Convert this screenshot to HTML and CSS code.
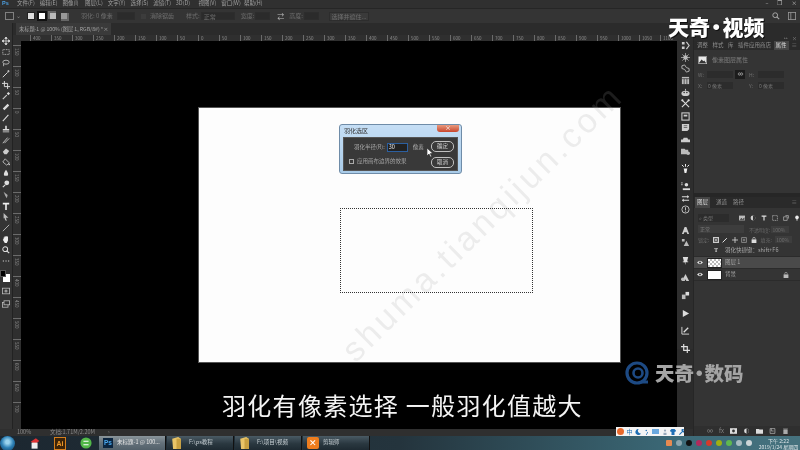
FILE: index.html
```html
<!DOCTYPE html>
<html lang="zh">
<head>
<meta charset="utf-8">
<title>Photoshop</title>
<link rel="stylesheet" href="styles.css">
</head>
<body>
<svg class="defs" width="0" height="0">
  <defs>
    <symbol id="eye" viewBox="0 0 10 8"><path d="M0 4Q5-2 10 4Q5 10 0 4Z" fill="#ddd"/><circle cx="5" cy="4" r="1.6" fill="#333"/></symbol>
  </defs>
</svg>
<div class="app">
  <header class="menu">
    <span class="ps-mark">Ps</span>
    <span class="mi">文件(F)</span><span class="mi">编辑(E)</span><span class="mi">图像(I)</span><span class="mi">图层(L)</span><span class="mi">文字(Y)</span><span class="mi">选择(S)</span><span class="mi">滤镜(T)</span><span class="mi">3D(D)</span><span class="mi">视图(V)</span><span class="mi">窗口(W)</span><span class="mi">帮助(H)</span>
    <span class="win-ctrls"><i>–</i><i>❐</i><i>×</i></span>
  </header>
  <section class="opts">
    <svg class="o-marq" viewBox="0 0 9 8"><rect x=".5" y=".5" width="8" height="7" fill="none" stroke="#ccc" stroke-dasharray="1 1"/></svg>
    <span class="o-caret">⌄</span>
    <span class="sq sq-a"></span><span class="sq sq-b"></span><span class="sq sq-c"></span><span class="sq sq-d"></span>
    <span class="o-lbl o-feather">羽化: 0 像素</span>
    <span class="o-box o-fbox"></span>
    <span class="o-check"></span>
    <span class="o-lbl">消除锯齿</span>
    <span class="o-lbl o-style">样式:</span>
    <span class="o-box o-sel">正常</span>
    <span class="o-lbl o-wl">宽度:</span>
    <span class="o-box o-w"></span>
    <span class="o-swap">⇄</span>
    <span class="o-lbl o-hl">高度:</span>
    <span class="o-box o-w"></span>
    <span class="o-box o-btn">选择并遮住...</span>
    <svg class="o-search" viewBox="0 0 10 10"><circle cx="4" cy="4" r="3" fill="none" stroke="#aaa" stroke-width="1.2"/><path d="M6 6l3 3" stroke="#aaa" stroke-width="1.3"/></svg>
    <svg class="o-space" viewBox="0 0 10 10"><rect x=".5" y=".5" width="9" height="9" fill="none" stroke="#999"/><path d="M3.500 .5V9.500" stroke="#999"/></svg>
  </section>
  <main class="main">
    <div class="left">
      <div class="work">
        <nav class="tools">
          <svg class="t" viewBox="0 0 10 10"><path d="M5 0v10M0 5h10M5 0L3.500 2h3zM5 10L3.500 8h3zM0 5l2-1.500v3zM10 5L8 3.500v3z" stroke="#ddd" fill="#ddd" stroke-width=".9"/></svg>
          <svg class="t" viewBox="0 0 10 10"><rect x="1" y="2" width="8" height="6" fill="none" stroke="#ddd" stroke-dasharray="1 1"/></svg>
          <svg class="t" viewBox="0 0 10 10"><ellipse cx="5" cy="4" rx="4" ry="2.500" fill="none" stroke="#ccc"/><path d="M2 6l0 3" stroke="#ccc"/></svg>
          <svg class="t" viewBox="0 0 10 10"><path d="M1 9L7 3" stroke="#ddd" stroke-width="1.200"/><path d="M8 0v3M6.500 1.500h3" stroke="#eee" stroke-width=".8"/></svg>
          <svg class="t" viewBox="0 0 10 10"><path d="M3 0v7h7M0 3h7v7" fill="none" stroke="#ddd" stroke-width="1.200"/></svg>
          <svg class="t" viewBox="0 0 10 10"><path d="M1 9L6 4" stroke="#ccc" stroke-width="1.400"/><path d="M6 2l2 2 2-2-2-2z" fill="#ddd"/></svg>
          <svg class="t" viewBox="0 0 10 10"><path d="M1 7L7 1l2 2-6 6z" fill="#ddd"/></svg>
          <svg class="t" viewBox="0 0 10 10"><path d="M1 9L8 1" stroke="#ddd" stroke-width="1.300"/></svg>
          <svg class="t" viewBox="0 0 10 10"><path d="M4 1h2v4h3v2H1V5h3zM1 8h8v1H1z" fill="#ddd"/></svg>
          <svg class="t" viewBox="0 0 10 10"><path d="M1 9L7 2M3 9L9 3" stroke="#ddd" stroke-width="1"/></svg>
          <svg class="t" viewBox="0 0 10 10"><path d="M1 6l4-4 4 3-3 4H3z" fill="#ccc"/></svg>
          <svg class="t" viewBox="0 0 10 10"><path d="M4 1l5 5-3 3-5-4z" fill="none" stroke="#ccc"/><circle cx="9" cy="8" r="1" fill="#ccc"/></svg>
          <svg class="t" viewBox="0 0 10 10"><path d="M5 1Q9 6 7 8.500H3Q1 6 5 1z" fill="#ddd"/></svg>
          <svg class="t" viewBox="0 0 10 10"><circle cx="6" cy="3.500" r="3" fill="#ddd"/><path d="M4 6L1 9" stroke="#ddd" stroke-width="1.400"/></svg>
          <svg class="t" viewBox="0 0 10 10"><path d="M2 1l5 4-1 4-2-3z" fill="#aaa"/></svg>
          <svg class="t" viewBox="0 0 10 10"><path d="M1 1h8v2H6v7H4V3H1z" fill="#eee"/></svg>
          <svg class="t" viewBox="0 0 10 10"><path d="M2 0l6 6H5l1 4-2-1-1-3-1 1z" fill="#bbb"/></svg>
          <svg class="t" viewBox="0 0 10 10"><path d="M1 9L9 1" stroke="#ccc"/></svg>
          <svg class="t" viewBox="0 0 10 10"><path d="M2 5V3h1v2-3h1.500v3-3.500H6V5 2h1.500v5L6 10H3.500L1 6z" fill="#eee"/></svg>
          <svg class="t" viewBox="0 0 10 10"><circle cx="4" cy="4" r="3" fill="none" stroke="#ddd" stroke-width="1.300"/><path d="M6 6l3 3" stroke="#ddd" stroke-width="1.500"/></svg>
          <svg class="t" viewBox="0 0 10 10"><path d="M1 5h1.500M4.300 5h1.500M7.500 5H9" stroke="#ccc" stroke-width="1.300"/></svg>
          <div class="swatch"><span class="sw-bg"></span><span class="sw-fg"></span></div>
          <svg class="t t-mask" viewBox="0 0 10 10"><rect x=".5" y="1.500" width="9" height="7" fill="none" stroke="#bbb"/><circle cx="5" cy="5" r="2" fill="#999"/></svg>
          <svg class="t t-scr" viewBox="0 0 10 10"><rect x=".5" y="3" width="7" height="6" fill="#333" stroke="#bbb"/><rect x="2.500" y="1" width="7" height="5" fill="#333" stroke="#bbb"/></svg>
        </nav>
        <div class="center">
          <div class="tabbar"><span class="doctab"><span>未标题-1 @ 100% (图层 1, RGB/8#) *</span><i>×</i></span></div>
          <div class="body">
            <div class="viewport">
              <div class="hruler">
                <span>400</span><span>350</span><span>300</span><span>250</span><span>200</span><span>150</span><span>100</span><span>50</span><span>0</span><span>50</span><span>100</span><span>150</span><span>200</span><span>250</span><span>300</span><span>350</span><span>400</span><span>450</span><span>500</span><span>550</span><span>600</span><span>650</span><span>700</span><span>750</span><span>800</span><span>850</span><span>900</span><span>950</span><span>1000</span><span>1050</span><span>1100</span>
              </div>
              <div class="stage">
                <div class="vruler">
                  <span>150</span><span>100</span><span>50</span><span>0</span><span>50</span><span>100</span><span>150</span><span>200</span><span>250</span><span>300</span><span>350</span><span>400</span><span>450</span><span>500</span><span>550</span><span>600</span><span>650</span><span>700</span>
                </div>
                <div class="canvas"><div class="page"></div></div>
              </div>
            </div>
            <aside class="dock">
              <svg class="d" viewBox="0 0 10 10"><path d="M1 1h3v3H1zM1 6h3v3H1z" fill="#ccc"/><path d="M6 1l3 4-3 4" fill="none" stroke="#ccc" stroke-width="1.300"/></svg>
              <svg class="d" viewBox="0 0 10 10"><circle cx="5" cy="5" r="2.500" fill="#bbb"/><path d="M5 0v10M0 5h10M1.500 1.500l7 7M8.500 1.500l-7 7" stroke="#bbb" stroke-width=".8"/></svg>
              <svg class="d" viewBox="0 0 10 10"><path d="M1 2l3-1 2 3 3 1v3l-3 1-2-3-3-1z" fill="none" stroke="#bbb"/></svg>
              <svg class="d" viewBox="0 0 10 10"><path d="M1 1h8v8H1z" fill="#bbb"/><path d="M3.500 3v6M6.500 3v6M1 3h8" stroke="#333" stroke-width=".8"/></svg>
              <svg class="d" viewBox="0 0 10 10"><ellipse cx="5" cy="6" rx="4.500" ry="3" fill="#ccc"/><circle cx="3.500" cy="5" r=".9" fill="#333"/><circle cx="6.500" cy="5" r=".9" fill="#333"/><path d="M5 1v2" stroke="#ccc"/></svg>
              <svg class="d" viewBox="0 0 10 10"><path d="M1 1l8 8M9 1L1 9" stroke="#ddd" stroke-width="1.200"/><circle cx="1.500" cy="1.500" r="1.200" fill="#ddd"/><circle cx="8.500" cy="1.500" r="1.200" fill="#ddd"/></svg>
              <svg class="d d-wide" viewBox="0 0 10 10"><rect x="1" y="1" width="8" height="8" fill="none" stroke="#ccc" stroke-width="1.200"/><rect x="3" y="3" width="4" height="2" fill="#ccc"/></svg>
              <svg class="d" viewBox="0 0 10 10"><path d="M1 1h8v6L7 9H1z" fill="#ccc"/><path d="M3 3h4M3 5h4" stroke="#333" stroke-width=".7"/></svg>
              <svg class="d" viewBox="0 0 10 10"><path d="M0 5h2l1-2h4l1 2h2v3H0z" fill="#ccc"/></svg>
              <svg class="d" viewBox="0 0 10 10"><path d="M0 2h4l1 1h3v5H0z" fill="#bbb"/><circle cx="8" cy="7" r="2" fill="#bbb"/></svg>
              <svg class="d d-gap" viewBox="0 0 10 10"><path d="M3 5h4l-1 5H4z" fill="#eee"/><path d="M1 1l2 2M5 0v3M9 1L7 3" stroke="#eee" stroke-width="1.100"/></svg>
              <svg class="d d-gap" viewBox="0 0 10 10"><circle cx="6" cy="3" r="2" fill="#ddd"/><path d="M2 9V7h8v2z" fill="#ddd"/><path d="M0 1h2M0 3h2" stroke="#bbb"/></svg>
              <svg class="d" viewBox="0 0 10 10"><path d="M1 3h7M9 7H2" stroke="#ddd" stroke-width="1.200"/><path d="M7 1l2 2-2 2zM3 5L1 7l2 2z" fill="#ddd"/></svg>
              <svg class="d" viewBox="0 0 10 10"><circle cx="5" cy="5" r="4" fill="none" stroke="#ccc"/><path d="M5 2.500v3.500M5 7v1" stroke="#ccc"/></svg>
              <svg class="d d-gap2" viewBox="0 0 10 10"><path d="M1 9L4 1h2l3 8H7l-.7-2H3.700L3 9z" fill="#ccc"/></svg>
              <svg class="d" viewBox="0 0 10 10"><path d="M1 1h3v3H1zM6 3l3 6H3z" fill="#bbb"/></svg>
              <svg class="d d-gap" viewBox="0 0 10 10"><path d="M2 1h6L7 5v1h1v1H5v3L4 7H2V6h1V5z" fill="#ddd"/></svg>
              <svg class="d d-gap" viewBox="0 0 10 10"><path d="M5 1L1 9h3l1-2 1 2h3z" fill="#ccc"/><circle cx="2" cy="7" r="2" fill="#bbb"/></svg>
              <svg class="d d-gap" viewBox="0 0 10 10"><path d="M1 4h4v5H1z" fill="#bbb"/><path d="M5 1h4v4H5z" fill="#ddd"/></svg>
              <svg class="d d-gap" viewBox="0 0 10 10"><path d="M2 1l7 4-7 4z" fill="#ddd"/></svg>
              <svg class="d d-gap" viewBox="0 0 10 10"><path d="M1 1v8h8" fill="none" stroke="#ddd"/><path d="M3 7l5-5" stroke="#ddd" stroke-width="1.500"/></svg>
              <svg class="d d-gap" viewBox="0 0 10 10"><path d="M3 0v7h7M0 3h7v7" fill="none" stroke="#ddd" stroke-width="1.300"/></svg>
            </aside>
          </div>
        </div>
      </div>
      <footer class="status"><span class="st-zoom">100%</span><span class="st-doc">文档:1.71M/2.20M</span><span class="st-caret">›</span></footer>
    </div>
    <div class="panels">
      <div class="p-collapse"><span>‣‣</span><span>×</span></div>
      <div class="p-tabs">
        <span>调整</span><span>样式</span><span>库</span><span class="wide">插件应用商店</span><span class="on">属性</span><b>≡</b>
      </div>
      <section class="props">
        <div class="prop-head">
          <svg class="prop-ic" viewBox="0 0 10 9"><rect width="10" height="9" fill="#e8e8e8"/><path d="M1 8l3-4 2 2 1-1 2 3z" fill="#333"/><rect x=".7" y=".7" width="8.600" height="7.600" fill="none" stroke="#333" stroke-width=".5"/></svg>
          <span>像素图层属性</span>
        </div>
        <div class="prop-grid">
          <span class="pl">W:</span><span class="pf"></span><span class="plink"><svg viewBox="0 0 10 6"><path d="M4.500 1.500A2 1.700 0 1 0 4.500 4.500L5.500 1.500A2 1.700 0 1 1 5.500 4.500" fill="none" stroke="#ddd" stroke-width=".9"/></svg></span><span class="pl">H:</span><span class="pf"></span>
          <span class="pl">X:</span><span class="pf">0 像素</span><span></span><span class="pl">Y:</span><span class="pf">0 像素</span>
        </div>
      </section>
      <div class="p-sep"></div>
      <div class="p-tabs l-tabs"><span class="on">图层</span><span>通道</span><span>路径</span><b>≡</b></div>
      <section class="layers">
        <div class="l-filter">
          <span class="l-kind">⌕ 类型</span>
          <svg class="f" viewBox="0 0 10 8"><rect width="10" height="8" fill="#bbb"/><path d="M1 7l3-3 2 2 3-3v4z" fill="#333"/></svg>
          <svg class="f" viewBox="0 0 10 10"><circle cx="5" cy="5" r="4" fill="#ccc"/><path d="M5 1a4 4 0 0 1 0 8z" fill="#333"/></svg>
          <svg class="f" viewBox="0 0 10 10"><path d="M1 1h8v2H6v6H4V3H1z" fill="#ddd"/></svg>
          <svg class="f" viewBox="0 0 10 10"><path d="M1 1h8v8H1z" fill="none" stroke="#ccc" stroke-dasharray="2 1"/></svg>
          <svg class="f" viewBox="0 0 10 10"><path d="M1 3h6v6H1z" fill="none" stroke="#ccc"/><path d="M4 1h5v5" fill="none" stroke="#ccc"/></svg>
          <svg class="f" viewBox="0 0 10 10"><circle cx="5" cy="4" r="3" fill="#eee"/><path d="M4 7h2v2H4z" fill="#eee"/></svg>
        </div>
        <div class="l-row2"><span class="l-blend">正常</span><span class="l-dim">不透明度:</span><span class="l-val">100%</span></div>
        <div class="l-row3">
          <span class="l-dim">锁定:</span>
          <svg class="lk" viewBox="0 0 10 10"><path d="M0 0h10v10H0z" fill="#ccc"/><path d="M2 2h6v6H2z" fill="#444"/><circle cx="5" cy="5" r="1.500" fill="#ccc"/></svg>
          <svg class="lk" viewBox="0 0 10 10"><path d="M1 9L8 2" stroke="#eee" stroke-width="1.600"/></svg>
          <svg class="lk" viewBox="0 0 10 10"><path d="M5 0v10M0 5h10" stroke="#ddd" stroke-width="1.300"/></svg>
          <svg class="lk" viewBox="0 0 10 10"><path d="M1 1h8v8H1z" fill="none" stroke="#bbb"/><path d="M5 3v4M3 5h4" stroke="#bbb"/></svg>
          <svg class="lk" viewBox="0 0 10 10"><rect x="1" y="4" width="8" height="6" fill="#ddd"/><path d="M3 4V2.500a2 2 0 0 1 4 0V4" fill="none" stroke="#ddd"/></svg>
          <span class="l-dim l-fill">填充:</span><span class="l-val l-val2">100%</span>
        </div>
        <div class="layer l-text"><span class="eye-slot"></span><span class="l-t">T</span><span>羽化快捷键：shift+F6</span></div>
        <div class="layer l-sel"><svg class="eye"><use href="#eye"/></svg><span class="thumb checker"></span><span>图层 1</span></div>
        <div class="layer"><svg class="eye"><use href="#eye"/></svg><span class="thumb"></span><span>背景</span><svg class="lock" viewBox="0 0 10 10"><rect x="1" y="4" width="8" height="6" fill="#bbb"/><path d="M3 4V2.500a2 2 0 0 1 4 0V4" fill="none" stroke="#bbb"/></svg></div>
        <div class="l-fillspace"></div>
        <div class="l-foot">
          <span>∞</span><span>fx</span>
          <svg class="ft" viewBox="0 0 10 8"><rect width="10" height="8" fill="#ddd"/><circle cx="5" cy="4" r="2" fill="#333"/></svg>
          <svg class="ft" viewBox="0 0 10 10"><circle cx="5" cy="5" r="4" fill="#ddd"/><path d="M5 1a4 4 0 0 1 0 8z" fill="#333"/></svg>
          <svg class="ft" viewBox="0 0 10 8"><path d="M0 1h4l1 1h5v6H0z" fill="#ddd"/></svg>
          <svg class="ft" viewBox="0 0 10 10"><path d="M1 1h8v8H1z" fill="none" stroke="#ccc"/><path d="M3 1v4h4" fill="none" stroke="#ccc"/></svg>
          <svg class="ft" viewBox="0 0 10 10"><path d="M2 3h6v7H2zM1 1.500h8" fill="#aaa" stroke="#aaa"/></svg>
        </div>
      </section>
    </div>
  </main>
  <div class="taskbar">
    <div class="orb"></div>
    <svg class="qk qk1" viewBox="0 0 14 14"><path d="M2 5L8 1l4 3-5 4z" fill="#d33"/><path d="M3 6h7v7H3z" fill="#eee"/></svg>
    <span class="qk qk2">Ai</span>
    <svg class="qk qk3" viewBox="0 0 14 14"><circle cx="7" cy="7" r="6.500" fill="#52b848"/><path d="M4 5h6M4 9h6" stroke="#fff" stroke-width="1.300"/></svg>
    <span class="tb tb-on"><span class="tb-ps">Ps</span><span>未标题-1 @ 100...</span></span>
    <span class="tb tb-folder"><svg class="folder" viewBox="0 0 10 14"><path d="M0 2l7-2 3 2v12H1z" fill="#e8c468"/><path d="M5 2l5 0v12H5z" fill="#c8a040"/></svg><span>F:\ps教程</span></span>
    <span class="tb tb-folder"><svg class="folder" viewBox="0 0 10 14"><path d="M0 2l7-2 3 2v12H1z" fill="#e8c468"/><path d="M5 2l5 0v12H5z" fill="#c8a040"/></svg><span>F:\项目\视频</span></span>
    <span class="tb"><span class="tb-jx">✕</span><span>剪辑师</span></span>
    <span class="tray">
      <i class="c1"></i><i class="c2"></i><i class="c3"></i><i class="c4"></i><i class="c5"></i><i class="c6"></i><i class="c7"></i><i class="c8"></i><i class="c9"></i>
    </span>
    <span class="clock"><span>下午 2:22</span><span>2019/1/24 星期四</span></span>
  </div>

  <div class="watermark">shuma.tianqijun.com</div>
  <div class="marquee"></div>
  <div class="dialog">
    <div class="d-title"><span>羽化选区</span><span class="d-close">×</span></div>
    <div class="d-body">
      <div class="d-left">
        <div class="d-line"><span>羽化半径(R):</span><span class="d-input">30</span><span>像素</span></div>
        <div class="d-line d-line2"><span class="d-check"></span><span>应用画布边界的效果</span></div>
      </div>
      <div class="d-btns"><span class="d-btn">确定</span><span class="d-btn">取消</span></div>
    </div>
  </div>
  <svg class="cursor" viewBox="0 0 7 10"><path d="M0 0v8l2-2 1.500 3 1.200-.6-1.400-2.800H6z" fill="#fff" stroke="#222" stroke-width=".6"/></svg>
  <div class="logo-top">天奇 · 视频</div>
  <div class="logo-bot">
    <svg class="logo-ic" viewBox="0 0 24 24"><circle cx="12" cy="12" r="10" fill="none" stroke="#1d4a84" stroke-width="3.200"/><circle cx="13" cy="12" r="4.500" fill="none" stroke="#1d4a84" stroke-width="2.600"/><path d="M16 21h7" stroke="#1d4a84" stroke-width="3"/></svg>
    <span>天奇 · 数码</span>
  </div>
  <div class="subtitle">羽化有像素选择 一般羽化值越大</div>
  <div class="ime">
    <i class="im-logo"></i><span>中</span>
    <svg class="im" viewBox="0 0 8 8"><path d="M5 0a4 4 0 1 0 3 6A3.500 3.500 0 0 1 5 0z" fill="#1f6fb5"/></svg>
    <svg class="im" viewBox="0 0 8 8"><circle cx="3" cy="2" r="1" fill="#1f6fb5"/><path d="M5 4L3 8" stroke="#1f6fb5"/></svg>
    <i class="im-kb"></i>
    <svg class="im" viewBox="0 0 8 8"><circle cx="4" cy="2" r="1.500" fill="#9ab"/><path d="M2 8V5h4v3z" fill="#9ab"/></svg>
    <svg class="im" viewBox="0 0 8 8"><path d="M0 2l2-2h4l2 2-1 2-1-.5V8H2V3.500L1 4z" fill="#1f6fb5"/></svg>
    <svg class="im" viewBox="0 0 8 8"><path d="M0 7l4-4a2 2 0 0 1 3-3L5.500 1.500l1 1L8 1a2 2 0 0 1-3 3L1 8z" fill="#1f6fb5"/></svg>
  </div>
</div>
</body>
</html>
```

FILE: styles.css
```css
* { box-sizing: border-box; }
html, body { margin: 0; padding: 0; background: #000; }
.defs { position: absolute; }
.app {
  position: relative;
  width: 800px;
  height: 450px;
  overflow: hidden;
  display: flex;
  flex-direction: column;
  background: #000;
  color: #999;
  font: 6px/1 "Noto Sans CJK SC", "Liberation Sans", sans-serif;
  filter: blur(.45px);
}
i { font-style: normal; }
svg { display: block; flex: none; }

/* menu */
.menu {
  height: 8px;
  flex: none;
  background: #303030;
  display: flex;
  align-items: flex-start;
  padding-left: 2px;
  line-height: 6px;
  font-size: 5.500px;
}
.ps-mark { width: 15px; color: #4c9fe0; font-weight: 700; font-family: "Liberation Sans", sans-serif; }
.mi { width: 22.700px; color: #a0a0a0; white-space: nowrap; }
.win-ctrls { margin-left: auto; display: flex; gap: 9px; padding-right: 3px; color: #bbb; }

/* options */
.opts {
  height: 15px;
  flex: none;
  background: #343434;
  border-top: 1px solid #262626;
  display: flex;
  align-items: center;
  padding-left: 5px;
  color: #6e6e6e;
}
.o-marq { width: 9px; height: 8px; }
.o-caret { margin: 0 7px 0 2px; color: #888; }
.sq { width: 6px; height: 6px; background: #ddd; margin-right: 5px; box-shadow: 0 0 0 1px #222; }
.sq-b { background: #fff; box-shadow: 0 0 0 2px #111; }
.sq-c { background: #bbb; box-shadow: -1px -1px 0 1px #666; }
.sq-d { background: #999; box-shadow: 1px 1px 0 1px #666; }
.o-lbl { white-space: nowrap; }
.o-feather { margin-left: 9px; width: 33px; }
.o-box { background: #2b2b2b; height: 8px; line-height: 7px; border: 1px solid #2d2d2d; white-space: nowrap; }
.o-fbox { width: 18px; margin-left: 3px; }
.o-check { width: 5px; height: 5px; margin: 0 4px 0 6px; background: #3c3c3c; }
.o-style { margin-left: 12px; }
.o-sel { width: 34px; margin-left: 1px; padding-left: 2px; }
.o-wl { margin-left: 6px; }
.o-w { width: 15px; margin-left: 1px; }
.o-swap { margin: 0 5px 0 7px; color: #bbb; font-size: 7px; }
.o-btn { width: 40px; margin-left: 10px; text-align: center; background: #3a3a3a; height: 9px; }
.o-search { width: 8px; height: 8px; margin-left: auto; }
.o-space { width: 8px; height: 8px; margin: 0 4px 0 8px; }

/* main frame */
.main { flex: 1; min-height: 0; display: flex; background: #2b2b2b; }
.left { flex: none; width: 693px; display: flex; flex-direction: column; }
.work { flex: 1; min-height: 0; display: flex; }
.status {
  height: 7px;
  flex: none;
  background: #2f2f2f;
  display: flex;
  align-items: center;
  font-size: 5.500px;
  color: #8a8a8a;
  white-space: nowrap;
}
.st-zoom { margin-left: 17px; width: 33px; }
.st-doc { width: 58px; }

/* tools */
.tools {
  flex: none;
  width: 13px;
  background: #343434;
  border-right: 1px solid #222;
  padding-top: 12px;
  display: flex;
  flex-direction: column;
  align-items: center;
}
.t { width: 8px; height: 8px; margin: 1.500px 0; }
.swatch { position: relative; width: 12px; height: 21px; flex: none; }
.sw-fg { position: absolute; left: 0; top: 4px; width: 6px; height: 7px; background: #000; border: 1px solid #555; }
.sw-bg { position: absolute; left: 3px; top: 8px; width: 7px; height: 8px; background: #fff; }
.t-mask { margin-top: 0; }
.t-scr { margin-top: 3px; }

/* centre */
.center { flex: 1; min-width: 0; display: flex; flex-direction: column; }
.tabbar { height: 12px; flex: none; background: #2b2b2b; display: flex; padding-left: 3px; }
.doctab {
  background: #3a3a3a;
  padding: 0 4px 0 3px;
  width: 95px;
  display: flex;
  align-items: center;
  justify-content: space-between;
  white-space: nowrap;
  color: #a5a5a5;
  font-size: 5.200px;
}
.body { flex: 1; min-height: 0; display: flex; }
.viewport { flex: 1; min-width: 0; display: flex; flex-direction: column; }
.hruler {
  height: 6px;
  flex: none;
  background: #2f2f2f;
  display: flex;
  padding-left: 17px;
  overflow: hidden;
  font-size: 4.500px;
  line-height: 6px;
  color: #8c8c8c;
}
.hruler span { width: 21px; flex: none; padding-left: 2px; border-left: 1px solid #6b6b6b; height: 6px; }
.stage { flex: 1; min-height: 0; display: flex; }
.vruler {
  width: 8px;
  flex: none;
  background: #2f2f2f;
  padding-top: 4px;
  overflow: hidden;
  font-size: 4.500px;
  line-height: 8px;
  color: #8c8c8c;
}
.vruler span { display: block; height: 21px; writing-mode: vertical-rl; padding-top: 2px; border-top: 1px solid #6b6b6b; }
.canvas { flex: 1; min-width: 0; background: #000; padding: 67px 0 0 178px; }
.page { width: 421px; height: 254px; background: #fdfdfd; box-shadow: 0 0 0 1px #555; }

/* dock */
.dock {
  width: 16px;
  height: 314px;
  flex: none;
  background: #2e2e2e;
  padding-top: 6px;
  display: flex;
  flex-direction: column;
  align-items: center;
}
.d { width: 9px; height: 9px; margin-bottom: 2.700px; }
.d-wide { margin-top: .5px; }
.d-gap { margin-top: 6px; }
.d-gap2 { margin-top: 9px; }

/* panels */
.panels {
  flex: none;
  width: 107px;
  margin-top: 12px;
  display: flex;
  flex-direction: column;
  background: #343434;
  border-left: 1px solid #262626;
  color: #909090;
}
.p-collapse {
  height: 6px;
  flex: none;
  background: #2b2b2b;
  display: flex;
  justify-content: flex-end;
  gap: 4px;
  padding-right: 3px;
  line-height: 6px;
  font-size: 5px;
}
.p-sep { height: 4px; flex: none; background: #262626; }
.p-tabs {
  height: 9px;
  flex: none;
  display: flex;
  align-items: center;
  background: #2a2a2a;
  padding-left: 3px;
  gap: 4.500px;
  white-space: nowrap;
  font-size: 5.500px;
  position: relative;
}
.p-tabs span { height: 9px; line-height: 9px; }
.p-tabs .on { background: #454545; color: #ddd; padding: 0 2px; margin-left: -2px; }
.p-tabs b { position: absolute; right: 3px; font-weight: 400; color: #888; }
.l-tabs { height: 11px; gap: 6px; }
.l-tabs span { height: 11px; line-height: 11px; }
.props { height: 143px; flex: none; padding: 5px 0 0 4px; }
.prop-head { display: flex; align-items: center; gap: 5px; height: 9px; color: #7c7c7c; font-size: 6px; }
.prop-ic { width: 9px; height: 8px; }
.prop-grid {
  margin-top: 6px;
  display: grid;
  grid-template-columns: 7px 26px 12px 7px 26px;
  column-gap: 2px;
  grid-auto-rows: 8px;
  row-gap: 3px;
  font-size: 5px;
  align-items: center;
}
.pl { color: #6f6f6f; }
.pf { background: #2c2c2c; height: 7px; line-height: 7px; padding-left: 1px; color: #777; }
.plink { width: 10px; height: 9px; background: #1c1c1c; display: flex; align-items: center; justify-content: center; }
.plink svg { width: 7px; height: 4px; }
.layers { flex: 1; min-height: 0; display: flex; flex-direction: column; }
.l-filter { height: 16px; flex: none; display: flex; align-items: center; gap: 5px; padding: 4px 0 0 4px; }
.l-kind { width: 33px; height: 8px; background: #2c2c2c; line-height: 8px; color: #777; margin-right: 5px; font-size: 5px; padding-left: 1px; }
.f { width: 6px; height: 6px; }
.l-row2, .l-row3 { flex: none; display: flex; align-items: center; height: 10px; padding-left: 4px; font-size: 5px; color: #6a6a6a; }
.l-blend { width: 46px; height: 8px; line-height: 8px; background: #3d3d3d; padding-left: 2px; margin-right: 5px; color: #777; }
.l-dim { color: #666; white-space: nowrap; }
.l-val { background: #3d3d3d; height: 7px; line-height: 7px; width: 18px; margin-left: 1px; color: #6c6c6c; padding-left: 1px; }
.l-val2 { width: 17px; margin-left: 0; }
.l-row3 { gap: 3.500px; height: 11px; }
.lk { width: 6px; height: 6px; }
.layer {
  height: 12px;
  flex: none;
  display: flex;
  align-items: center;
  padding-left: 3px;
  font-size: 5.500px;
  color: #a5a5a5;
  border-bottom: 1px solid #2b2b2b;
}
.eye { width: 6px; height: 5px; margin-right: 4px; }
.eye-slot { width: 10px; flex: none; }
.l-t { color: #ddd; width: 18px; text-align: center; font-weight: 700; font-family: "Liberation Serif", serif; }
.l-sel { background: #4a4a4a; }
.thumb { width: 15px; height: 10px; background: #fff; margin-right: 3px; border: 1px solid #222; }
.checker {
  background-color: #fff;
  background-image: linear-gradient(45deg, #bbb 25%, transparent 25%, transparent 75%, #bbb 75%), linear-gradient(45deg, #bbb 25%, transparent 25%, transparent 75%, #bbb 75%);
  background-size: 4px 4px;
  background-position: 0 0, 2px 2px;
}
.lock { width: 6px; height: 6px; margin-left: 47px; }
.l-fillspace { flex: 1; }
.l-foot {
  height: 10px;
  flex: none;
  background: #2f2f2f;
  display: flex;
  align-items: center;
  justify-content: flex-end;
  gap: 6px;
  padding-right: 11px;
  color: #888;
  font-size: 6px;
}
.ft { width: 7px; height: 6px; }

/* taskbar */
.taskbar {
  height: 14px;
  flex: none;
  background: linear-gradient(90deg, #1c2730 0%, #24343d 50%, #3c6a78 85%, #46727e 100%);
  display: flex;
  align-items: center;
  color: #c8d0d4;
  font-size: 5.500px;
  white-space: nowrap;
}
.orb {
  width: 15px;
  height: 15px;
  border-radius: 50%;
  background: radial-gradient(circle at 50% 40%, #9ad4ee 0 15%, #2c7fb4 50%, #123a5a 100%);
  flex: none;
}
.qk { flex: none; }
.qk1 { width: 12px; height: 13px; margin-left: 14px; }
.qk2 {
  width: 12px; height: 13px; margin-left: 13px;
  background: #3d2408; border: 1px solid #d47e1d; color: #f09a2a;
  font: 700 7px/11px "Liberation Sans", sans-serif; text-align: center;
}
.qk3 { width: 12px; height: 12px; margin-left: 14px; }
.tb {
  flex: none;
  width: 67px;
  height: 14px;
  margin-left: 1px;
  display: flex;
  align-items: center;
  gap: 4px;
  padding-left: 4px;
  background: linear-gradient(180deg, #4a5a64, #2a3840 55%, #1e2a32);
  border-right: 1px solid #111;
  overflow: hidden;
}
.tb-on { margin-left: 7px; background: linear-gradient(180deg, #8a959b, #64717a 50%, #52606a); color: #e8e8e8; }
.tb-ps {
  width: 10px; height: 10px; background: #0b2540; color: #4aa8ee;
  font: 700 6.500px/10px "Liberation Sans", sans-serif; text-align: center; flex: none;
}
.folder { width: 9px; height: 12px; }
.tb-folder { padding-left: 5px; gap: 8px; }
.tb-jx {
  width: 12px; height: 12px; background: #ee7d1e; color: #fff; border-radius: 2px;
  font-size: 9px; line-height: 12px; text-align: center; flex: none;
}
.tray { margin-left: auto; display: flex; gap: 4px; align-items: center; }
.tray i { width: 6px; height: 6px; border-radius: 50%; display: block; }
.tray .c1 { background: #e88a50; border-radius: 1px; }
.tray .c2 { background: #8aa5ae; }
.tray .c3 { background: #111; }
.tray .c4 { background: #b02a5c; }
.tray .c5 { background: #d53a2a; }
.tray .c6 { background: #9fb012; }
.tray .c7 { background: #5fb84f; }
.tray .c8 { background: #a9bcc2; }
.tray .c9 { background: #ccd5d8; }
.clock {
  display: flex;
  flex-direction: column;
  align-items: center;
  gap: 1px;
  width: 43px;
  margin-left: 5px;
  font-size: 5px;
  color: #dde5e8;
}

/* overlays */
.watermark {
  position: absolute;
  left: 359px;
  top: 333px;
  font: 34px/1 "Liberation Sans", sans-serif;
  letter-spacing: 3.500px;
  color: rgba(160, 160, 160, .18);
  white-space: nowrap;
  transform-origin: 0 100%;
  transform: rotate(-44.500deg);
}
.marquee { position: absolute; left: 340px; top: 208px; width: 193px; height: 85px; border: 1px dotted #333; }
.dialog {
  position: absolute;
  left: 339px;
  top: 124px;
  width: 123px;
  height: 50px;
  background: linear-gradient(180deg, #c5def5, #a9cbe8);
  border: 1px solid #6f8ca8;
  border-radius: 3px;
  padding: 0 3px 2px;
  display: flex;
  flex-direction: column;
  color: #a5a5a5;
  font-size: 5.500px;
}
.d-title { height: 12px; flex: none; display: flex; justify-content: space-between; color: #333; line-height: 11px; font-size: 6px; padding-left: 1px; }
.d-close {
  width: 22px; height: 7px; margin-right: -1px;
  background: linear-gradient(180deg, #e99a7e, #c8452c);
  color: #fff; text-align: center; line-height: 6px; border-radius: 0 0 3px 3px;
}
.d-body { flex: 1; background: #393939; display: flex; justify-content: space-between; padding: 3px 3px 0 5px; border: 1px solid #555; }
.d-line { display: flex; align-items: center; gap: 2px; padding-left: 5px; height: 9px; margin-top: 2px; white-space: nowrap; }
.d-line2 { padding-left: 0; gap: 3px; margin-top: 5px; }
.d-input { width: 21px; height: 9px; border: 1px solid #2c5f9f; background: #222; color: #e8e8e8; line-height: 7px; padding-left: 1px; margin-right: 3px; }
.d-check { width: 5px; height: 5px; border: 1px solid #aaa; flex: none; }
.d-btns { display: flex; flex-direction: column; gap: 5px; }
.d-btn { width: 23px; height: 11px; border: 1px solid #c0c0c0; border-radius: 5px; text-align: center; line-height: 9px; color: #d5d5d5; }
.cursor { position: absolute; left: 427px; top: 148px; width: 7px; height: 10px; }
.logo-top {
  position: absolute;
  left: 668px;
  top: 17px;
  font-size: 21px;
  line-height: 19px;
  font-weight: 900;
  color: #fff;
  white-space: pre;
  word-spacing: -9px;
  text-shadow: 1px 1px 0 #111;
}
.logo-bot { position: absolute; left: 625px; top: 360px; display: flex; align-items: center; gap: 6px; font-size: 19.500px; line-height: 24px; font-weight: 900; color: #a4a4a4; white-space: pre; word-spacing: -9px; }
.logo-ic { width: 24px; height: 26px; }
.subtitle {
  position: absolute;
  left: 222px;
  top: 390px;
  font-size: 24px;
  line-height: 30px;
  letter-spacing: 1.300px;
  color: #f4f4f4;
  white-space: pre;
}
.ime {
  position: absolute;
  left: 616px;
  top: 427px;
  width: 68px;
  height: 9px;
  background: #f4f4f4;
  display: flex;
  align-items: center;
  gap: 2.500px;
  padding-left: 1px;
  color: #1f6fb5;
  font-size: 6px;
  overflow: hidden;
}
.im { width: 6px; height: 6px; }
.im-logo { width: 7px; height: 7px; border-radius: 50%; background: #e8692c; flex: none; }
.im-kb { width: 7px; height: 5px; background: #6aa8de; flex: none; }
```
